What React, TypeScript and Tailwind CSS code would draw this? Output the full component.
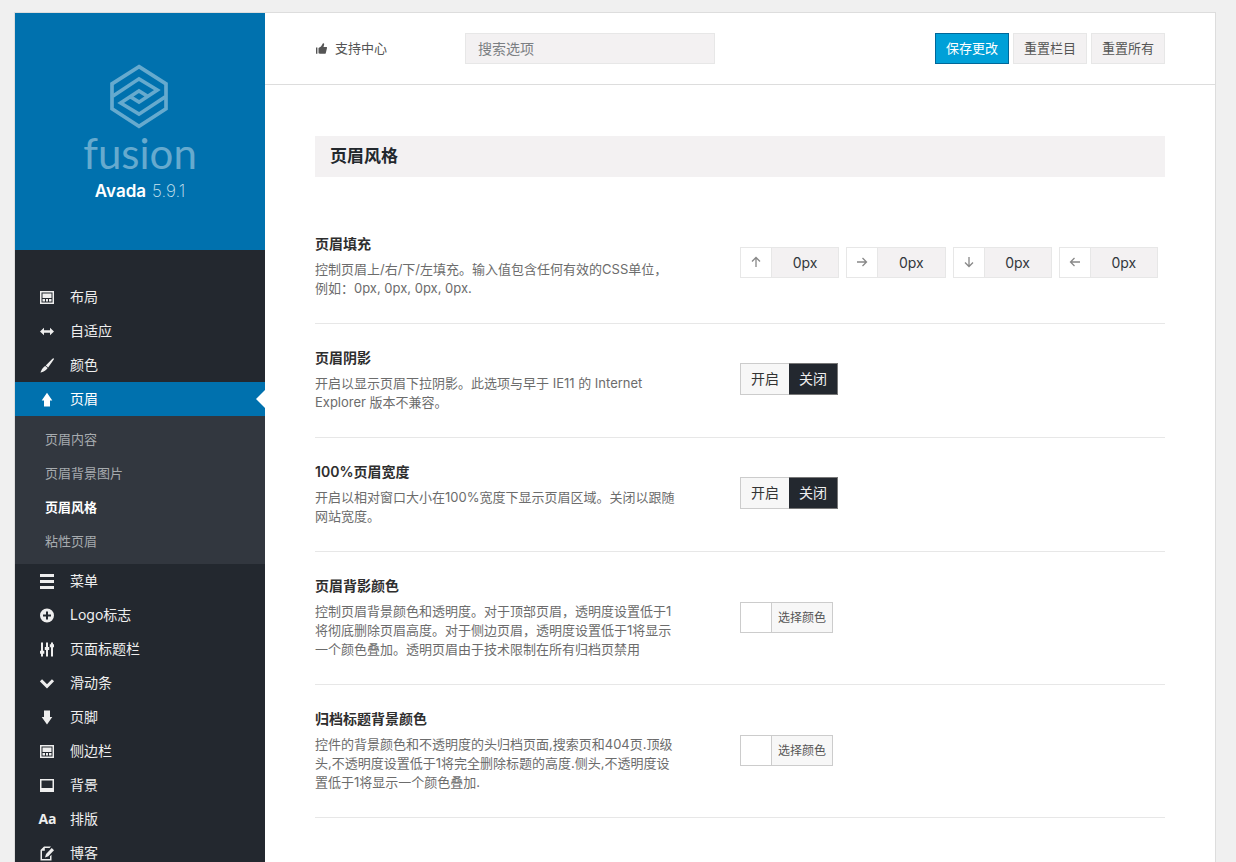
import React, { useState } from 'react';

type IconProps = { className?: string };

const LayoutIcon: React.FC<IconProps> = ({ className }) => (
  <svg viewBox="0 0 15 15" fill="currentColor" className={className} aria-hidden="true">
    <path fillRule="evenodd" d="M0 1h14v13H0V1zm1.500 1.500v10h11v-10h-11z" />
    <path d="M2.500 3.500h9v4.500h-9zM2.500 9H5v2.500H2.500zM6 9h2v2.500H6zM9 9h2.500v2.500H9z" />
  </svg>
);

const ResizeIcon: React.FC<IconProps> = ({ className }) => (
  <svg viewBox="0 0 15 15" fill="currentColor" className={className} aria-hidden="true">
    <path d="M0 7.500l4-3.700v2.500h6V3.800l4 3.700-4 3.700V8.700H4v2.500L0 7.500z" />
  </svg>
);

const BrushIcon: React.FC<IconProps> = ({ className }) => (
  <svg viewBox="0 0 15 15" fill="currentColor" className={className} aria-hidden="true">
    <path d="M13.800.4c.3.3 0 1-.4 1.600L8.200 9.600 5.700 7.400l6.500-6.300c.5-.5 1.200-1 1.600-.7zM5.200 7.900l2.500 2.200c-1.600 2.100-3.500 3.600-6.800 4.400-.3 0-.5-.3-.3-.6 1-1.300 1.200-3.900 4.600-6z" />
  </svg>
);

const ArrowUpIcon: React.FC<IconProps> = ({ className }) => (
  <svg viewBox="0 0 15 15" fill="currentColor" className={className} aria-hidden="true">
    <path d="M7 .8l5.300 7.700H10v6H4v-6H1.700L7 .8z" />
  </svg>
);

const ArrowDownIcon: React.FC<IconProps> = ({ className }) => (
  <svg viewBox="0 0 15 15" fill="currentColor" className={className} aria-hidden="true">
    <path d="M7 14.500L1.700 7H4V.5h6V7h2.300L7 14.500z" />
  </svg>
);

const MenuIcon: React.FC<IconProps> = ({ className }) => (
  <svg viewBox="0 0 15 15" fill="currentColor" className={className} aria-hidden="true">
    <path d="M0 0h14v3H0zM0 6h14v3H0zM0 12h14v3H0z" />
  </svg>
);

const PlusIcon: React.FC<IconProps> = ({ className }) => (
  <svg viewBox="0 0 15 15" fill="currentColor" className={className} aria-hidden="true">
    <path fillRule="evenodd" d="M7 .5a7 7 0 110 14 7 7 0 010-14zM6 3.500v3H3v2h3v3h2v-3h3v-2H8v-3H6z" />
  </svg>
);

const SlidersIcon: React.FC<IconProps> = ({ className }) => (
  <svg viewBox="0 0 15 15" fill="currentColor" className={className} aria-hidden="true">
    <path d="M1 .5h2v8.300h1.300v3H3v2.700H1v-2.700H0v-3h1zM6 .5h2V5h1.200v3H8v6.500H6V8H4.800V5H6zM11 .5h2v1.800h1v3h-1v9.200h-2V5.300H9.800v-3H11z" />
  </svg>
);

const ChevronIcon: React.FC<IconProps> = ({ className }) => (
  <svg viewBox="0 0 15 15" fill="none" stroke="currentColor" strokeWidth="3" className={className} aria-hidden="true">
    <path d="M1 4.300l6 6 6-6" />
  </svg>
);

const DesktopIcon: React.FC<IconProps> = ({ className }) => (
  <svg viewBox="0 0 15 15" fill="currentColor" className={className} aria-hidden="true">
    <path fillRule="evenodd" d="M0 1h14v13H0V1zm1.500 1.500V10h11V2.500h-11z" />
  </svg>
);

const TypeIcon: React.FC<IconProps> = ({ className }) => (
  <span className={`${className} flex items-center justify-center font-['Liberation_Sans_Narrow','Open_Sans',sans-serif] text-sm font-bold`} aria-hidden="true">
    Aa
  </span>
);

const EditIcon: React.FC<IconProps> = ({ className }) => (
  <svg viewBox="0 0 15 15" fill="currentColor" className={className} aria-hidden="true">
    <path d="M4 .5h7L9.600 2H4.800v2.700H2V13h8v-2.800l1.500-1.500v5.800H.5V4L4 .5z" />
    <path d="M11.700 2l2.300 2.300-5.700 6L5 11.500l1.100-3.600L11.700 2z" />
  </svg>
);

const ThumbIcon: React.FC<IconProps> = ({ className }) => (
  <svg viewBox="0 0 12 12" fill="currentColor" className={className} aria-hidden="true">
    <path d="M1 4.500h1.400v6.300H1zM3.500 5.100L6 3.400 7.800.5C8.300-.1 9.400.3 9.200 1.300L8.500 4h2.700c.7 0 1 .5.8 1.100l-1.200 4.800c-.1.600-.5.900-1.100.9H4.900l-1.400-.6V5.100z" />
  </svg>
);

const FusionMark: React.FC<IconProps> = ({ className }) => (
  <svg viewBox="0 0 180 194" fill="none" stroke="currentColor" strokeWidth="11" className={className} aria-hidden="true">
    <path d="M87 7.500L168 59v75L87 186.500 6 134V59L87 7.500z" />
    <path d="M8 96.500L87 44l55 33.500L87 114 60 97M166 97.500L87 150l-55-33.500L87 80l27 17" />
  </svg>
);

const arrowPaths = {
  up: 'M6 11V1.500M2 5.500l4-4 4 4',
  right: 'M1 6h9.500M6.500 2l4 4-4 4',
  down: 'M6 1v9.500M2 6.500l4 4 4-4',
  left: 'M11 6H1.500M5.500 2l-4 4 4 4',
};

type Direction = keyof typeof arrowPaths;

interface NavItem {
  label: string;
  icon: React.FC<IconProps>;
  children?: string[];
}

const navItems: NavItem[] = [
  { label: '布局', icon: LayoutIcon },
  { label: '自适应', icon: ResizeIcon },
  { label: '颜色', icon: BrushIcon },
  { label: '页眉', icon: ArrowUpIcon, children: ['页眉内容', '页眉背景图片', '页眉风格', '粘性页眉'] },
  { label: '菜单', icon: MenuIcon },
  { label: 'Logo标志', icon: PlusIcon },
  { label: '页面标题栏', icon: SlidersIcon },
  { label: '滑动条', icon: ChevronIcon },
  { label: '页脚', icon: ArrowDownIcon },
  { label: '侧边栏', icon: LayoutIcon },
  { label: '背景', icon: DesktopIcon },
  { label: '排版', icon: TypeIcon },
  { label: '博客', icon: EditIcon },
];

const Sidebar: React.FC = () => {
  const [section, setSection] = useState('页眉风格');

  return (
    <aside className="w-[250px] shrink-0 bg-[#23282f]">
      <div className="flex h-[237px] flex-col items-center bg-[#0071ae] pt-[51px]">
        <FusionMark className="h-[65px] w-[60px] text-[#66aace]" />
        <p className="mt-1 font-['Lato',sans-serif] text-[42px] leading-10 text-[#66aace]">fusion</p>
        <p className="mt-2 flex gap-1.5 text-[17px] leading-5">
          <span className="font-semibold text-white">Avada</span>
          <span className="font-extralight text-[#cce3ef]">5.9.1</span>
        </p>
      </div>
      <nav className="pt-[30px]">
        <ul>
          {navItems.map(({ label, icon: Icon, children }) => (
            <li key={label}>
              <a
                href="#"
                className={`relative flex h-[34px] items-center gap-[15px] pl-[25px] text-sm ${children ? 'bg-[#0071ae] text-white' : 'text-[#eeeeee]'}`}
              >
                <Icon className="h-[15px] w-[15px]" />
                {label}
                {children && (
                  <span className="absolute right-0 border-y-9 border-r-9 border-y-transparent border-r-white" />
                )}
              </a>
              {children && (
                <ul className="bg-[#32373f] pt-[7px] pb-[5px]">
                  {children.map(child => (
                    <li key={child}>
                      <a
                        href="#"
                        onClick={() => setSection(child)}
                        className={`flex h-[34px] items-center pl-[30px] text-[13px] ${child === section ? 'font-semibold text-white' : 'text-[#a7abaf]'}`}
                      >
                        {child}
                      </a>
                    </li>
                  ))}
                </ul>
              )}
            </li>
          ))}
        </ul>
      </nav>
    </aside>
  );
};

const Toolbar: React.FC = () => (
  <header className="flex h-[72px] items-center border-b border-[#dddddd] px-[50px]">
    <a href="#" className="flex w-[150px] items-center gap-2 text-[13px] text-[#555555]">
      <ThumbIcon className="h-3 w-3" />
      支持中心
    </a>
    <input
      type="search"
      aria-label="搜索选项"
      placeholder="搜索选项"
      className="h-[31px] w-[250px] border border-[#e7e7e7] bg-[#f3f1f2] px-3 text-sm placeholder:text-[#7b7f83]"
    />
    <div className="ml-auto flex gap-1 text-[13px] text-[#555555]">
      <button type="button" className="h-[31px] border border-[#006799] bg-[#00a0d8] px-2.5 text-white">保存更改</button>
      <button type="button" className="h-[31px] border border-[#e7e7e7] bg-[#f3f1f2] px-2.5">重置栏目</button>
      <button type="button" className="h-[31px] border border-[#e7e7e7] bg-[#f3f1f2] px-2.5">重置所有</button>
    </div>
  </header>
);

interface OptionProps {
  title: string;
  description: string;
  children: React.ReactNode;
}

const Option: React.FC<OptionProps> = ({ title, description, children }) => (
  <section className="grid grid-cols-2 items-center border-b border-[#e7e7e7] pt-6 pb-[25px]">
    <div className="pr-16">
      <h3 className="text-sm leading-5 font-semibold text-[#2e2e2e]">{title}</h3>
      <p className="mt-1.5 text-[13px] leading-[19px] text-[#6c6c6c]">{description}</p>
    </div>
    {children}
  </section>
);

const paddings: { direction: Direction; label: string }[] = [
  { direction: 'up', label: '上' },
  { direction: 'right', label: '右' },
  { direction: 'down', label: '下' },
  { direction: 'left', label: '左' },
];

const SpacingFields: React.FC = () => (
  <div className="grid grid-cols-4 pb-2">
    {paddings.map(({ direction, label }) => (
      <label key={direction} className="mr-[7px] flex h-[31px] border border-[#e7e7e7]">
        <span className="flex w-[31px] shrink-0 items-center justify-center border-r border-[#e7e7e7] text-[#888888]">
          <svg viewBox="0 0 12 12" fill="none" stroke="currentColor" strokeWidth="1.300" className="h-3 w-3" aria-hidden="true">
            <path d={arrowPaths[direction]} />
          </svg>
        </span>
        <input
          type="text"
          aria-label={label}
          defaultValue="0px"
          className="w-full min-w-0 bg-[#f3f1f2] pt-0.5 text-center text-sm text-[#32373c]"
        />
      </label>
    ))}
  </div>
);

const Toggle: React.FC = () => {
  const [on, setOn] = useState(false);
  const active = 'border-[#777777] bg-[#23282f] text-[#eeeeee]';
  const idle = 'border-[#cccccc] bg-[#f7f7f7] text-[#333333]';

  return (
    <div className="flex pb-0.5 text-sm">
      <button
        type="button"
        aria-pressed={on}
        onClick={() => setOn(true)}
        className={`h-8 w-[49px] border border-r-0 ${on ? active : idle}`}
      >
        开启
      </button>
      <button
        type="button"
        aria-pressed={!on}
        onClick={() => setOn(false)}
        className={`h-8 w-[49px] border border-l-0 ${on ? idle : active}`}
      >
        关闭
      </button>
    </div>
  );
};

const ColorButton: React.FC = () => (
  <div className="flex">
    <button type="button" className="flex h-[31px] items-center border border-[#cccccc] bg-[#f7f7f7] text-xs text-[#555555]">
      <span className="h-full w-[31px] border-r border-[#cccccc] bg-white" />
      <span className="px-1.5">选择颜色</span>
    </button>
  </div>
);

const App: React.FC = () => {
  return (
    <div
      lang="zh-CN"
      className="h-screen overflow-hidden bg-[#f0f0f0] pt-3 pr-5 pl-3.5 font-['Inter','Noto_Sans_CJK_SC',sans-serif]"
    >
      <div className="flex min-h-full border border-[#dddddd] bg-white">
        <Sidebar />
        <div className="min-w-0 flex-1">
          <Toolbar />
          <main className="px-[50px] pt-[51px]">
            <h2 className="mb-[33px] bg-[#f3f1f2] px-[15px] text-[17px] leading-[41px] font-semibold text-[#23282d]">
              页眉风格
            </h2>
            <Option
              title="页眉填充"
              description="控制页眉上/右/下/左填充。输入值包含任何有效的CSS单位，例如：0px, 0px, 0px, 0px."
            >
              <SpacingFields />
            </Option>
            <Option
              title="页眉阴影"
              description="开启以显示页眉下拉阴影。此选项与早于 IE11 的 Internet Explorer 版本不兼容。"
            >
              <Toggle />
            </Option>
            <Option
              title="100%页眉宽度"
              description="开启以相对窗口大小在100%宽度下显示页眉区域。关闭以跟随网站宽度。"
            >
              <Toggle />
            </Option>
            <Option
              title="页眉背影颜色"
              description="控制页眉背景颜色和透明度。对于顶部页眉，透明度设置低于1将彻底删除页眉高度。对于侧边页眉，透明度设置低于1将显示一个颜色叠加。透明页眉由于技术限制在所有归档页禁用"
            >
              <ColorButton />
            </Option>
            <Option
              title="归档标题背景颜色"
              description="控件的背景颜色和不透明度的头归档页面,搜索页和404页.顶级头,不透明度设置低于1将完全删除标题的高度.侧头,不透明度设置低于1将显示一个颜色叠加."
            >
              <ColorButton />
            </Option>
          </main>
        </div>
      </div>
    </div>
  );
};

export default App;
